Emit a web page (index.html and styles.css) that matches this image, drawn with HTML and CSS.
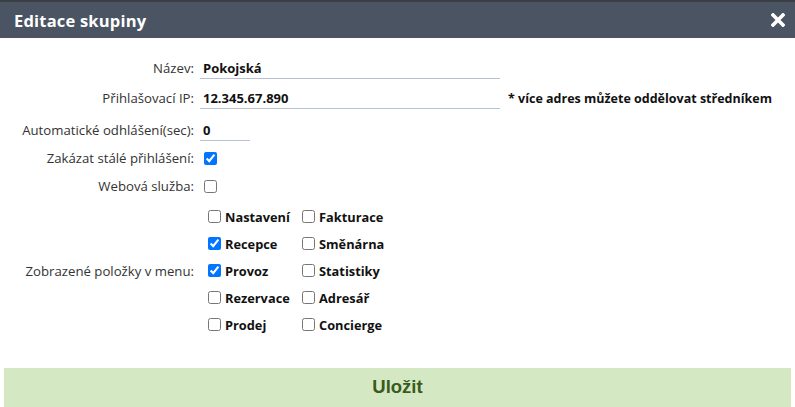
FILE: index.html
```html
<!DOCTYPE html>
<html lang="cs">
<head>
<meta charset="utf-8">
<title>Editace skupiny</title>
<link rel="stylesheet" href="styles.css">
</head>
<body>
<div class="dialog">
  <header class="head">
    <h1 class="title">Editace skupiny</h1>
    <button class="close" type="button" aria-label="Zavřít">
      <svg width="14" height="14" viewBox="0 0 14 14"><path d="M2 2 L12 12 M12 2 L2 12" stroke="#fff" stroke-width="3.6" stroke-linecap="square"/></svg>
    </button>
  </header>
  <form class="form">
    <div class="row r1">
      <label class="lbl">Název:</label>
      <div class="field"><input class="txt wide" type="text" value="Pokojská"></div>
    </div>
    <div class="row r2">
      <label class="lbl">Přihlašovací IP:</label>
      <div class="field"><input class="txt wide" type="text" value="12.345.67.890"><span class="note">* více adres můžete oddělovat středníkem</span></div>
    </div>
    <div class="row r3">
      <label class="lbl">Automatické odhlášení(sec):</label>
      <div class="field"><input class="txt short" type="text" value="0"></div>
    </div>
    <div class="row r4">
      <label class="lbl">Zakázat stálé přihlášení:</label>
      <div class="field"><input class="cb" type="checkbox" checked></div>
    </div>
    <div class="row r5">
      <label class="lbl">Webová služba:</label>
      <div class="field"><input class="cb" type="checkbox"></div>
    </div>
    <div class="row menu">
      <label class="lbl">Zobrazené položky v menu:</label>
      <div class="grid">
        <label class="opt"><input class="cb" type="checkbox">Nastavení</label>
        <label class="opt"><input class="cb" type="checkbox">Fakturace</label>
        <label class="opt"><input class="cb" type="checkbox" checked>Recepce</label>
        <label class="opt"><input class="cb" type="checkbox">Směnárna</label>
        <label class="opt"><input class="cb" type="checkbox" checked>Provoz</label>
        <label class="opt"><input class="cb" type="checkbox">Statistiky</label>
        <label class="opt"><input class="cb" type="checkbox">Rezervace</label>
        <label class="opt"><input class="cb" type="checkbox">Adresář</label>
        <label class="opt"><input class="cb" type="checkbox">Prodej</label>
        <label class="opt"><input class="cb" type="checkbox">Concierge</label>
      </div>
    </div>
    <button class="save" type="button">Uložit</button>
  </form>
</div>
</body>
</html>
```
FILE: styles.css
```css
html, body {
  margin: 0;
  padding: 0;
  background: #fff;
}
body {
  font-family: "Open Sans", "DejaVu Sans", sans-serif;
  color: #333;
  overflow: hidden;
}
.head {
  height: 36px;
  border-top: 2px solid #3b3f44;
  background: #4a5462;
  display: flex;
  align-items: center;
  justify-content: space-between;
  padding: 0 10px 0 14px;
}
.title {
  margin: 0;
  font-size: 16.5px;
  font-weight: 700;
  color: #fff;
  letter-spacing: 0.2px;
}
.close {
  background: none;
  border: 0;
  padding: 0;
  width: 14px;
  height: 14px;
  display: flex;
}
.form {
  padding-top: 15px;
  display: flex;
  flex-direction: column;
}
.row {
  display: grid;
  grid-template-columns: 194px 1fr;
  column-gap: 6px;
  align-items: center;
}
.r1 { height: 30px; }
.r2 { height: 30px; }
.r3 { height: 34px; }
.r4 { height: 22px; }
.r5 { height: 34px; }
.lbl {
  text-align: right;
  font-size: 13.2px;
  color: #333;
  white-space: nowrap;
}
.field {
  display: flex;
  align-items: center;
}
.txt {
  font-family: inherit;
  font-size: 13px;
  font-weight: 700;
  color: #111;
  border: 0;
  border-bottom: 1px solid #b8c1d4;
  height: 22px;
  padding: 0 3px;
  box-sizing: border-box;
  outline: none;
  background: transparent;
}
.wide { width: 300px; }
.short { width: 50px; }
.note {
  margin-left: 8px;
  font-size: 12.5px;
  font-weight: 700;
  color: #111;
  white-space: nowrap;
}
.cb {
  width: 13px;
  height: 13px;
  margin: 0 0 0 4px;
}
.grid {
  display: grid;
  grid-template-columns: 94px 100px;
  grid-auto-rows: 27px;
  align-items: center;
  margin-left: 4px;
}
.opt {
  display: flex;
  align-items: center;
  gap: 4px;
  font-size: 12.8px;
  font-weight: 700;
  color: #111;
  white-space: nowrap;
}
.opt .cb { margin: 0 0 0 4px; }
.save {
  margin: 30px 4px 0 4px;
  height: 40px;
  border: 0;
  background: #d5e8c4;
  color: #3b5a1e;
  font-family: "Liberation Sans Narrow", "Liberation Sans", sans-serif;
  font-weight: 700;
  font-size: 18.5px;
  padding: 0 0 2px 0;
}
```
